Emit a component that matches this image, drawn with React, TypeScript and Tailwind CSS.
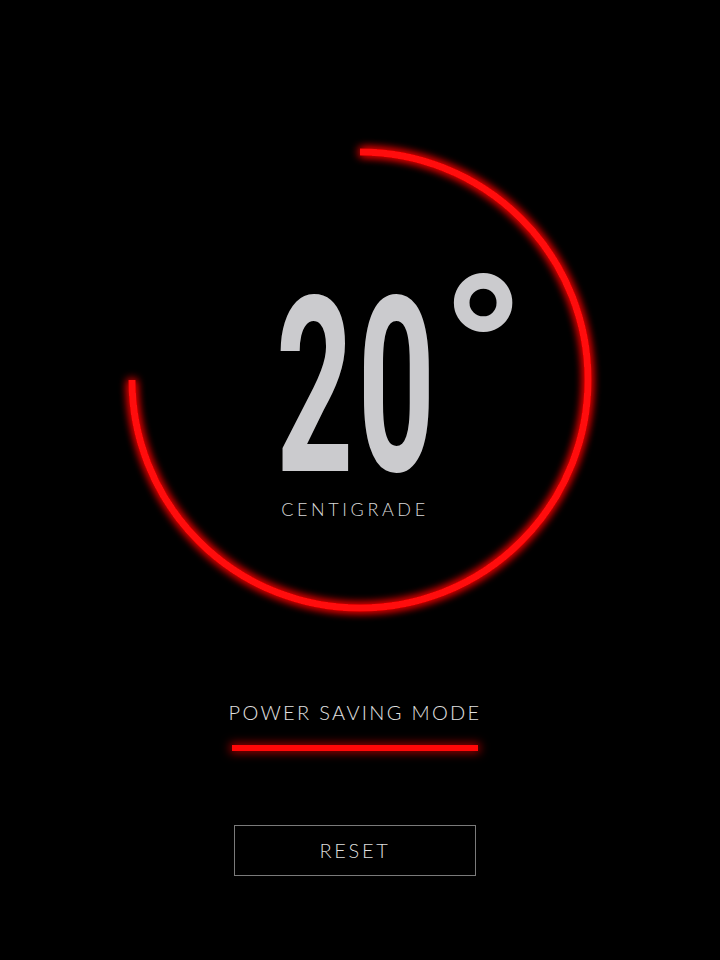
import React from "react";

export default function App() {
  return (
    <div className="relative w-[720px] h-[960px] bg-black overflow-hidden">
      <svg
        className="absolute inset-0"
        width="720"
        height="960"
        viewBox="0 0 720 960"
      >
        <defs>
          <filter id="glow" x="-20%" y="-20%" width="140%" height="140%">
            <feGaussianBlur stdDeviation="5" result="b" />
            <feMerge>
              <feMergeNode in="b" />
              <feMergeNode in="b" />
              <feMergeNode in="SourceGraphic" />
            </feMerge>
          </filter>
        </defs>
        <path
          d="M 360 152 A 228 228 0 1 1 132 380"
          fill="none"
          stroke="#ff0808"
          strokeWidth="7"
          filter="url(#glow)"
        />
      </svg>

      <div className="relative w-[710px] flex flex-col items-center pt-[266px] font-['Lato',sans-serif]">
        <div className="relative w-[150px] h-[233px]">
          <span className="absolute left-[-4px] top-[22px] block origin-left scale-x-[0.55] whitespace-nowrap text-[245px] leading-[200px] font-bold tracking-[8px] text-[#cbcbce] font-['Roboto',sans-serif]">
            20
          </span>
          <span className="absolute left-[160px] top-[-20px] block whitespace-nowrap text-[222px] leading-[222px] font-bold text-[#cbcbce] font-['Roboto',sans-serif]">
            °
          </span>
        </div>
        <div className="text-[18px] leading-[1.2] font-light tracking-[3.6px] text-[#d8d8d8]">
          CENTIGRADE
        </div>
        <div className="mt-[179px] text-[20px] leading-[1.2] font-light tracking-[2.3px] text-[#e2e2e2]">
          POWER SAVING MODE
        </div>
        <div className="mt-[21px] w-[246px] h-[6px] bg-[#ff0808] shadow-[0_0_10px_2px_rgba(255,0,0,0.6)]" />
        <button className="mt-[74px] w-[242px] h-[51px] border border-[#7a7a7a] flex items-center justify-center bg-black">
          <span className="text-[20px] leading-[1.2] font-light tracking-[2.7px] text-[#dedede]">
            RESET
          </span>
        </button>
      </div>
    </div>
  );
}
